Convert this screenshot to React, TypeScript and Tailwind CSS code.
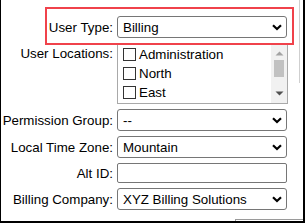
import type { ReactNode } from "react";

const locations = ["Administration", "North", "East"];

export default function App() {
  return (
    <div className="relative h-[223px] w-[305px] overflow-hidden border-b-2 border-l border-r-2 border-black bg-white pt-[16px] font-['Liberation_Sans',Arial,sans-serif] text-[13.33px] leading-[15px] text-black">
      <div className="grid grid-cols-[112px_171px] gap-x-1 gap-y-[5px]">
        <Label>User Type:</Label>
        <Select value="Billing" />

        <span className="pt-[3px] text-right">User Locations:</span>
        <div className="flex h-[61px] w-[171px] border border-[#a9a9a9] bg-white">
          <div className="flex flex-1 flex-col pl-[5px] pt-[1px]">
            {locations.map((loc) => (
              <label key={loc} className="flex h-[19px] items-center gap-[3px]">
                <input type="checkbox" className="h-[13px] w-[13px] appearance-none border border-[#333] bg-white" />
                <span>{loc}</span>
              </label>
            ))}
          </div>
          {/* fake list scrollbar */}
          <div className="flex w-[16px] flex-col items-center bg-[#f1f1f1]">
            <svg width="9" height="5" viewBox="0 0 9 5" className="mt-[7px]">
              <path d="M0.5 4.5 L4.5 0.5 L8.5 4.5 Z" fill="#a3a3a3" />
            </svg>
            <div className="mt-[4px] h-[17px] w-[10px] bg-[#c1c1c1]" />
            <svg width="9" height="5" viewBox="0 0 9 5" className="mt-[14px]">
              <path d="M0.5 0.5 L4.5 4.5 L8.5 0.5 Z" fill="#505050" />
            </svg>
          </div>
        </div>

        <Label>Permission Group:</Label>
        <Select value="--" />

        <Label>Local Time Zone:</Label>
        <Select value="Mountain" />

        <Label>Alt ID:</Label>
        <input className="h-[20px] w-[170px] rounded-[2px] border border-[#767676] bg-white px-[4px]" />

        <Label>Billing Company:</Label>
        <Select value="XYZ Billing Solutions" />
      </div>

      {/* highlight around the user type row */}
      <div className="pointer-events-none absolute left-[44px] top-[7px] h-[38px] w-[249px] border-2 border-[#f0424b]" />
      {/* neighbouring panel edges */}
      <div className="absolute left-[298px] top-0 h-[83px] w-px bg-[#cfcfcf]" />
      <div className="absolute left-[234px] top-[219px] h-[10px] w-[80px] border-l border-t border-[#9a9a9a]" />
    </div>
  );
}

function Label({ children }: { children: ReactNode }) {
  return <span className="flex items-center justify-end">{children}</span>;
}

function Select({ value }: { value: string }) {
  return (
    <div className="relative h-[22px] w-[170px]">
      <select
        defaultValue={value}
        className="h-full w-full appearance-none rounded-[3px] border border-[#767676] bg-white pl-[5px] pr-[20px]"
      >
        <option>{value}</option>
      </select>
      <svg width="10" height="7" viewBox="0 0 10 7" className="pointer-events-none absolute right-[5px] top-[8px]">
        <path d="M1 1.2 L5 5 L9 1.2" fill="none" stroke="#000" strokeWidth="2.2" />
      </svg>
    </div>
  );
}
